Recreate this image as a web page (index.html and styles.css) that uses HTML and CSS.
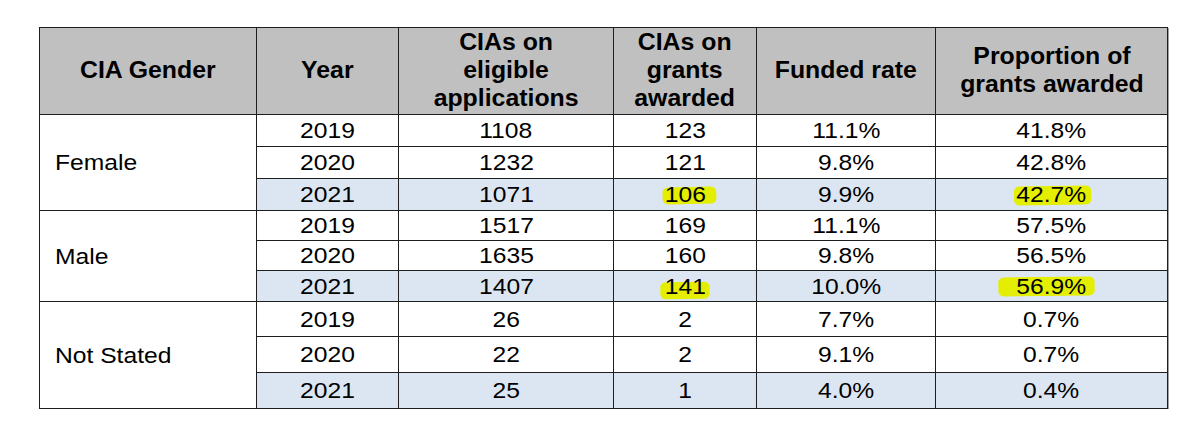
FILE: index.html
```html
<!DOCTYPE html>
<html lang="en">
<head>
<meta charset="utf-8">
<title>CIA Gender table</title>
<link rel="stylesheet" href="styles.css">
</head>
<body>
<table class="grid">
  <colgroup>
    <col class="c-gender">
    <col class="c-year">
    <col class="c-elig">
    <col class="c-grants">
    <col class="c-rate">
    <col class="c-prop">
  </colgroup>
  <thead>
    <tr class="head">
      <th><span class="t">CIA Gender</span></th>
      <th><span class="t">Year</span></th>
      <th><span class="t">CIAs on<br>eligible<br>applications</span></th>
      <th><span class="t">CIAs on<br>grants<br>awarded</span></th>
      <th><span class="t">Funded rate</span></th>
      <th><span class="t">Proportion of<br>grants awarded</span></th>
    </tr>
  </thead>
  <tbody>
    <tr class="r32">
      <td rowspan="3" class="gender"><span class="t">Female</span></td>
      <td><span class="t">2019</span></td>
      <td><span class="t">1108</span></td>
      <td><span class="t">123</span></td>
      <td><span class="t">11.1%</span></td>
      <td><span class="t">41.8%</span></td>
    </tr>
    <tr class="r32">
      <td><span class="t">2020</span></td>
      <td><span class="t">1232</span></td>
      <td><span class="t">121</span></td>
      <td><span class="t">9.8%</span></td>
      <td><span class="t">42.8%</span></td>
    </tr>
    <tr class="r32 blue">
      <td><span class="t">2021</span></td>
      <td><span class="t">1071</span></td>
      <td><span class="t hl hl-106">106</span></td>
      <td><span class="t">9.9%</span></td>
      <td><span class="t hl hl-427">42.7%</span></td>
    </tr>
    <tr class="r30">
      <td rowspan="3" class="gender"><span class="t">Male</span></td>
      <td><span class="t">2019</span></td>
      <td><span class="t">1517</span></td>
      <td><span class="t">169</span></td>
      <td><span class="t">11.1%</span></td>
      <td><span class="t">57.5%</span></td>
    </tr>
    <tr class="r30">
      <td><span class="t">2020</span></td>
      <td><span class="t">1635</span></td>
      <td><span class="t">160</span></td>
      <td><span class="t">9.8%</span></td>
      <td><span class="t">56.5%</span></td>
    </tr>
    <tr class="r31 blue">
      <td><span class="t">2021</span></td>
      <td><span class="t">1407</span></td>
      <td><span class="t hl hl-141">141</span></td>
      <td><span class="t">10.0%</span></td>
      <td><span class="t hl hl-569">56.9%</span></td>
    </tr>
    <tr class="r35">
      <td rowspan="3" class="gender"><span class="t">Not Stated</span></td>
      <td><span class="t">2019</span></td>
      <td><span class="t">26</span></td>
      <td><span class="t">2</span></td>
      <td><span class="t">7.7%</span></td>
      <td><span class="t">0.7%</span></td>
    </tr>
    <tr class="r36">
      <td><span class="t">2020</span></td>
      <td><span class="t">22</span></td>
      <td><span class="t">2</span></td>
      <td><span class="t">9.1%</span></td>
      <td><span class="t">0.7%</span></td>
    </tr>
    <tr class="r36 blue">
      <td><span class="t">2021</span></td>
      <td><span class="t">25</span></td>
      <td><span class="t">1</span></td>
      <td><span class="t">4.0%</span></td>
      <td><span class="t">0.4%</span></td>
    </tr>
  </tbody>
</table>
</body>
</html>
```

FILE: styles.css
```css
html, body {
  margin: 0;
  background: #ffffff;
}

body {
  padding: 27px 0 0 39px;
  font-family: "Liberation Sans", Arial, sans-serif;
  color: #000000;
}

.grid {
  border-collapse: collapse;
  table-layout: fixed;
  width: 1128px;
  box-shadow: 1px 1px 0 #a0a0a0;
}

.c-gender { width: 217px; }
.c-year   { width: 142px; }
.c-elig   { width: 215px; }
.c-grants { width: 143px; }
.c-rate   { width: 179px; }
.c-prop   { width: 232px; }

.grid th,
.grid td {
  border: 1px solid #1e1e1e;
  padding: 0;
  text-align: center;
  vertical-align: middle;
}

.head th {
  height: 86px;
  background: #c0c0c0;
  font-weight: bold;
  font-size: 23px;
  line-height: 27.7px;
}

.head .t {
  transform: scaleX(1.08);
}

.grid td {
  font-size: 22px;
  line-height: 25px;
}

.t {
  display: inline-block;
  transform: scaleX(1.12);
  transform-origin: 50% 50%;
}

.grid td.gender {
  text-align: left;
  padding-left: 15px;
  background: #ffffff;
}

.gender .t {
  transform-origin: 0 50%;
}

.r32 td { height: 31px; }
.r30 td { height: 29px; }
.r31 td { height: 30px; }
.r35 td { height: 34px; }
.r36 td { height: 35px; }

.blue td {
  background: #dce6f2;
}

.hl {
  position: relative;
}

.hl::before {
  content: "";
  position: absolute;
  z-index: -1;
  background: #e3ee00;
  border-radius: 5px;
}

.hl-106::before {
  left: -2px;
  right: -9px;
  top: 5px;
  bottom: 3px;
  transform: rotate(-1.2deg);
}

.hl-427::before {
  left: -2px;
  right: -5px;
  top: 4px;
  bottom: 2px;
  transform: rotate(-0.8deg);
}

.hl-141::before {
  left: -4px;
  right: -3px;
  top: 8px;
  bottom: 0;
  transform: rotate(-1deg);
}

.hl-569::before {
  left: -16px;
  right: -8px;
  top: 3px;
  bottom: 3px;
  transform: rotate(-0.6deg);
}
```
